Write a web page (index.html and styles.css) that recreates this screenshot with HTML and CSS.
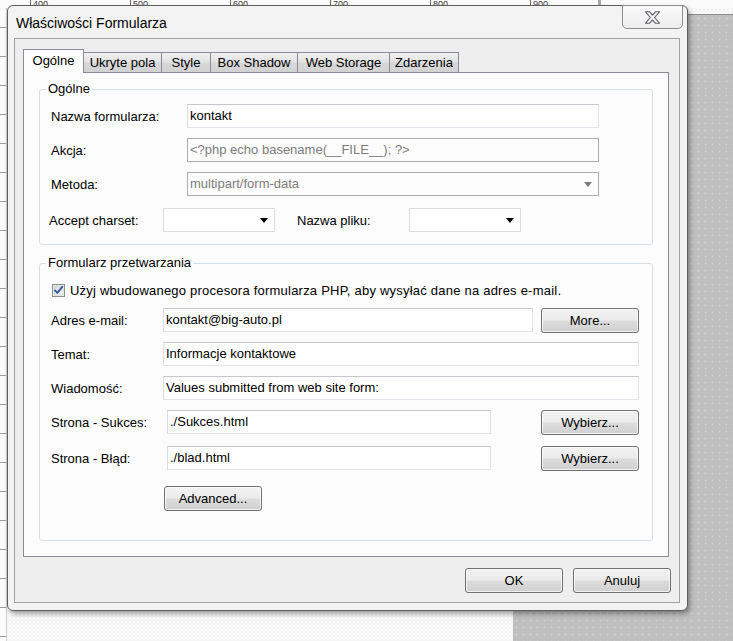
FILE: index.html
```html
<!DOCTYPE html>
<html lang="pl">
<head>
<meta charset="utf-8">
<title>Właściwości Formularza</title>
<link rel="stylesheet" href="styles.css">
</head>
<body>
<div class="desktop">
  <div class="ruler-top">
    <span class="tick">400</span><span class="tick">500</span><span class="tick">600</span><span class="tick">700</span><span class="tick">800</span><span class="tick tick-last">900</span><span class="ruler-end"></span>
  </div>
  <div class="ruler-left"></div>
  <div class="gray-area"></div>

  <div class="dialog">
    <div class="titlebar">
      <span class="title">Właściwości Formularza</span>
      <div class="close">
        <svg width="17" height="13" viewBox="0 0 17 13"><path d="M1.5 0.8 H5.6 L8.5 4.2 L11.4 0.8 H15.5 L10.6 6.5 L15.5 12.2 H11.4 L8.5 8.8 L5.6 12.2 H1.5 L6.4 6.5 Z" fill="#f6f6f7" stroke="#5d626e" stroke-width="1.1" stroke-linejoin="round"/></svg>
      </div>
    </div>

    <div class="client">
      <div class="tabs">
        <div class="tab active t1">Ogólne</div>
        <div class="tab t2">Ukryte pola</div>
        <div class="tab t3">Style</div>
        <div class="tab t4">Box Shadow</div>
        <div class="tab t5">Web Storage</div>
        <div class="tab t6">Zdarzenia</div>
      </div>

      <div class="panel">
        <div class="group g1">
          <div class="group-title">Ogólne</div>
          <div class="row first">
            <span class="lbl">Nazwa formularza:</span>
            <span class="field wide">kontakt</span>
          </div>
          <div class="row">
            <span class="lbl">Akcja:</span>
            <span class="field wide disabled">&lt;?php echo basename(__FILE__); ?&gt;</span>
          </div>
          <div class="row">
            <span class="lbl">Metoda:</span>
            <span class="field wide disabled select">multipart/form-data<span class="arrow grey"></span></span>
          </div>
          <div class="row r4">
            <span class="lbl lbl-charset">Accept charset:</span>
            <span class="field small select"><span class="arrow"></span></span>
            <span class="lbl lbl-file">Nazwa pliku:</span>
            <span class="field small select"><span class="arrow"></span></span>
          </div>
        </div>

        <div class="group g2">
          <div class="group-title">Formularz przetwarzania</div>
          <div class="check-row">
            <svg class="checkbox" width="13" height="13" viewBox="0 0 13 13">
              <defs><linearGradient id="cb" x1="0" y1="0" x2="1" y2="1"><stop offset="0" stop-color="#d8d8d8"/><stop offset="1" stop-color="#fbfbfb"/></linearGradient></defs>
              <rect x="0.5" y="0.5" width="12" height="12" fill="#f4f4f4" stroke="#8e8f8f"/>
              <rect x="2" y="2" width="9" height="9" fill="url(#cb)" stroke="#c4c4c4" stroke-width="0.6"/>
              <path d="M3 6.4 L5.4 8.9 L10.2 2.8" fill="none" stroke="#3a55a0" stroke-width="1.9" stroke-linecap="round" stroke-linejoin="round"/>
            </svg>
            <span class="check-text">Użyj wbudowanego procesora formularza PHP, aby wysyłać dane na adres e-mail.</span>
          </div>
          <div class="row">
            <span class="lbl lbl2">Adres e-mail:</span>
            <span class="field email">kontakt@big-auto.pl</span>
            <span class="btn side">More...</span>
          </div>
          <div class="row">
            <span class="lbl lbl2">Temat:</span>
            <span class="field full">Informacje kontaktowe</span>
          </div>
          <div class="row">
            <span class="lbl lbl2">Wiadomość:</span>
            <span class="field full">Values submitted from web site form:</span>
          </div>
          <div class="row">
            <span class="lbl lbl2">Strona - Sukces:</span>
            <span class="field page">./Sukces.html</span>
            <span class="btn side">Wybierz...</span>
          </div>
          <div class="row r-err">
            <span class="lbl lbl2">Strona - Błąd:</span>
            <span class="field page">./blad.html</span>
            <span class="btn side">Wybierz...</span>
          </div>
          <div class="adv-row">
            <span class="btn">Advanced...</span>
          </div>
        </div>
      </div>

      <div class="actions">
        <span class="btn">OK</span>
        <span class="btn">Anuluj</span>
      </div>
    </div>
  </div>
</div>
</body>
</html>
```

FILE: styles.css
```css
* {
  box-sizing: border-box;
}

body {
  margin: 0;
  font-family: "Liberation Sans", Arial, sans-serif;
  font-size: 13px;
  color: #000;
}

.desktop {
  position: relative;
  width: 733px;
  height: 641px;
  overflow: hidden;
  background-color: #f5f5f5;
  background-image: radial-gradient(circle, #ffffff 0.7px, transparent 1px);
  background-size: 4px 4px;
  display: flex;
  flex-direction: column;
}

/* rulers */
.ruler-top {
  display: flex;
  height: 8px;
  width: 733px;
  background: #fbfbfb;
  padding-left: 30px;
  flex: none;
}

.tick {
  width: 100px;
  height: 8px;
  border-left: 1px solid #6e6e6e;
  padding-left: 2px;
  font-size: 9px;
  line-height: 9px;
  color: #444;
  overflow: hidden;
}

.tick-last {
  width: 68px;
}

.ruler-end {
  width: 3px;
  height: 14px;
  background: #a9a9a9;
}

.ruler-left {
  width: 7px;
  flex: 1;
  background-color: #fbfbfb;
  background-image: repeating-linear-gradient(to bottom, transparent 0, transparent 19px, #9c9c9c 19px, #9c9c9c 20px, transparent 20px, transparent 29px);
  border-right: 1px solid #d0d0d0;
}

.gray-area {
  position: absolute;
  left: 513px;
  top: 14px;
  right: 0;
  bottom: 0;
  border-top: 1px solid #8a8a8a;
  background-color: #bfbfbf;
  background-image: radial-gradient(circle, #d4d4d4 0.8px, transparent 1.1px);
  background-size: 7px 7px;
}

/* dialog window */
.dialog {
  position: absolute;
  left: 7px;
  top: 5px;
  width: 681px;
  height: 606px;
  border: 1px solid #5e5e5e;
  border-radius: 6px;
  background: #f3f3f3;
  box-shadow: 2px 3px 5px rgba(0, 0, 0, 0.35);
  display: flex;
  flex-direction: column;
}

.titlebar {
  height: 32px;
  flex: none;
  display: flex;
  align-items: flex-start;
}

.title {
  padding: 9px 0 0 8px;
  font-size: 14px;
  line-height: 16px;
  color: #000;
}

.close {
  margin-left: auto;
  margin-right: 4px;
  margin-top: -1px;
  width: 61px;
  height: 24px;
  border: 1px solid #8e8e8e;
  border-radius: 0 0 5px 5px;
  background: linear-gradient(#fbfbfb, #ececec);
  display: flex;
  align-items: center;
  justify-content: center;
  padding-top: 1px;
}

.client {
  flex: 1;
  margin: 0 7px 7px 6px;
  border: 1px solid #a2a2a2;
  background: #eeeeee;
  padding: 10px 10px 0 8px;
  display: flex;
  flex-direction: column;
}

/* tabs */
.tabs {
  display: flex;
  align-items: flex-end;
  height: 23px;
  position: relative;
  z-index: 1;
  flex: none;
}

.tab {
  height: 20px;
  border: 1px solid #898c95;
  border-bottom: none;
  margin-left: -1px;
  background: linear-gradient(#f0f0f0, #e3e3e3 45%, #d7d7d7 55%, #d2d2d2);
  text-align: center;
  line-height: 19px;
  white-space: nowrap;
}

.tab.active {
  height: 24px;
  margin-left: 0;
  margin-bottom: -1px;
  background: #fcfcfc;
  line-height: 21px;
  position: relative;
  z-index: 2;
}

.t1 { width: 61px; }
.t2 { width: 79px; }
.t3 { width: 50px; }
.t4 { width: 88px; }
.t5 { width: 93px; }
.t6 { width: 70px; }

.panel {
  height: 485px;
  flex: none;
  border: 1px solid #898c95;
  background: #fcfcfc;
  padding: 16px 15px 0 15px;
}

/* group boxes */
.group {
  border: 1px solid #d5dfe5;
  border-radius: 3px;
}

.g1 {
  padding-bottom: 12px;
}

.g2 {
  margin-top: 18px;
  padding-bottom: 29px;
}

.group-title {
  display: table;
  margin: -9px 0 0 6px;
  padding: 0 2px;
  background: #fcfcfc;
  line-height: 16px;
}

.row {
  display: flex;
  align-items: center;
  height: 24px;
  margin-top: 10px;
  padding-left: 11px;
}

.row.first {
  margin-top: 7px;
}

.row.r4 {
  margin-top: 12px;
}

.row.r-err {
  margin-top: 12px;
}

.lbl {
  width: 136px;
  flex: none;
  white-space: nowrap;
}

.lbl2 {
  width: 112px;
}

.lbl-charset {
  width: 114px;
  margin-left: -2px;
}

.lbl-file {
  width: 112px;
  margin-left: 22px;
}

/* text fields */
.field {
  height: 24px;
  flex: none;
  position: relative;
  border: 1px solid #e1e5ea;
  border-top-color: #c4c7cc;
  border-left-color: #dadde2;
  background: #fff;
  padding: 0 2px;
  line-height: 21px;
  white-space: nowrap;
  overflow: hidden;
}

.field.disabled {
  border-color: #adadad;
  background: #fcfcfc;
  color: #7d7d7d;
}

.wide { width: 412px; }
.small {
  width: 112px;
  border-color: #dcdcdc;
}
.email { width: 370px; }
.full { width: 476px; }
.page {
  width: 324px;
  margin-left: 4px;
}

.arrow {
  position: absolute;
  right: 6px;
  top: 9px;
  width: 0;
  height: 0;
  border-left: 4px solid transparent;
  border-right: 4px solid transparent;
  border-top: 5px solid #000;
}

.arrow.grey {
  border-top-color: #7a7a7a;
}

.check-row {
  display: flex;
  align-items: center;
  height: 16px;
  margin-top: 11px;
  padding-left: 12px;
}

.checkbox {
  flex: none;
}

.check-text {
  margin-left: 5px;
  white-space: nowrap;
  letter-spacing: 0.22px;
}

/* buttons */
.btn {
  display: flex;
  align-items: center;
  justify-content: center;
  width: 98px;
  height: 25px;
  flex: none;
  border: 1px solid #707070;
  border-radius: 3px;
  background: linear-gradient(#f2f2f2, #ebebeb 48%, #dddddd 52%, #cfcfcf);
  box-shadow: inset 0 0 0 1px rgba(255, 255, 255, 0.7);
  color: #000;
  white-space: nowrap;
}

.btn.side {
  margin-left: auto;
  margin-right: 13px;
}

.adv-row {
  display: flex;
  margin-top: 16px;
  padding-left: 124px;
}

.actions {
  display: flex;
  justify-content: flex-end;
  gap: 10px;
  margin-top: 11px;
  margin-right: -2px;
}
```
